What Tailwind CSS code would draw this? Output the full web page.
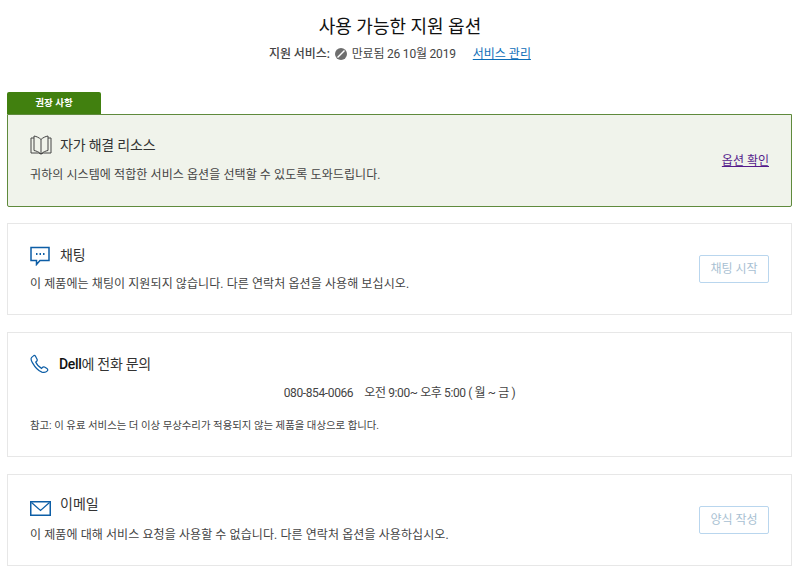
<!DOCTYPE html>
<html lang="ko">
<head>
    <meta charset="UTF-8">
    <meta name="viewport" content="width=device-width, initial-scale=1.0">
    <title>사용 가능한 지원 옵션</title>
    <script src="https://cdn.jsdelivr.net/npm/@tailwindcss/browser@4"></script>
</head>
<body class="bg-white text-[#333] h-[574px] w-[800px] overflow-hidden font-['Roboto','Noto_Sans_CJK_KR',sans-serif]">

    <!-- Header -->
    <div class="pt-[15px] text-center">
        <h1 class="text-[18px] leading-[24px] font-normal text-[#111]">사용 가능한 지원 옵션</h1>
        <div class="mt-[7px] flex items-center justify-center text-[12px] leading-[16px] text-[#444]">
            <span class="font-medium tracking-[-0.1px]">지원 서비스:</span>
            <svg class="ml-[5px] mr-[5px]" width="12" height="12" viewBox="0 0 12 12">
                <circle cx="6" cy="6" r="6" fill="#6e6e6e"/>
                <path d="M2.5 9.5 L9.5 2.5" stroke="#fff" stroke-width="1.4"/>
            </svg>
            <span class="tracking-[-0.2px]">만료됨 26 10월 2019</span>
            <a href="#" class="ml-[17px] text-[#0e6eb8] underline">서비스 관리</a>
        </div>
    </div>

    <div class="ml-[7px] mr-[8px] mt-[30px]">
        <!-- Recommended -->
        <div class="w-[94px] h-[22px] bg-[#41800f] rounded-t-[2px] flex items-center justify-center text-white text-[9.5px] font-bold">권장 사항</div>
        <div class="h-[93px] bg-[#f0f3eb] border border-[#5f8a3c] rounded-b-[2px] pl-[22px] pr-[22px] flex items-center justify-between">
            <div class="mb-[2px]">
                <div class="flex items-center h-[20px]">
                    <svg class="mr-[8px]" width="22" height="20" viewBox="0 0 22 20" fill="none" stroke="#444" stroke-width="1">
                        <path d="M11 4.5 C9 2.5 6.5 1.5 4 1 V15.5 C6.5 16 9 17 11 19 C13 17 15.5 16 18 15.5 V1 C15.5 1.5 13 2.5 11 4.5 Z"/>
                        <path d="M11 4.5 V19"/>
                        <path d="M4 3 H1 V18 H8.5 L11 19 L13.5 18 H21 V3 H18"/>
                    </svg>
                    <span class="text-[14px] text-[#333] tracking-[-0.2px]">자가 해결 리소스</span>
                </div>
                <p class="mt-[11px] text-[12px] leading-[18px] text-[#444] tracking-[0.09px]">귀하의 시스템에 적합한 서비스 옵션을 선택할 수 있도록 도와드립니다.</p>
            </div>
            <a href="#" class="text-[12px] text-[#551a8b] underline">옵션 확인</a>
        </div>

        <!-- Chat -->
        <div class="mt-[16px] h-[92px] border border-[#e7e7e7] pl-[22px] pr-[22px] flex items-center justify-between">
            <div>
                <div class="flex items-center h-[20px]">
                    <svg class="mr-[10px]" width="20" height="20" viewBox="0 0 20 20" fill="none">
                        <path d="M1 1.5 H19 V14.5 H10 L6.5 18.5 V14.5 H1 Z" stroke="#0d5ea6" stroke-width="1.5"/>
                        <path d="M6 8 H7.5 M9.5 8 H11 M13 8 H14.5" stroke="#0d5ea6" stroke-width="2"/>
                    </svg>
                    <span class="text-[14px] text-[#333] tracking-[-0.2px]">채팅</span>
                </div>
                <p class="mt-[9px] text-[12px] leading-[18px] text-[#444] tracking-[0.09px]">이 제품에는 채팅이 지원되지 않습니다. 다른 연락처 옵션을 사용해 보십시오.</p>
            </div>
            <button type="button" class="w-[70px] h-[28px] border border-[#b9d6ee] rounded-[2px] text-[12px] text-[#a8bfd2]">채팅 시작</button>
        </div>

        <!-- Phone -->
        <div class="mt-[17px] h-[125px] border border-[#e7e7e7] pl-[22px] pr-[22px] pt-[20px]">
            <div class="flex items-center h-[22px]">
                <svg class="mr-[10px]" width="19" height="20" viewBox="0 0 20 20" fill="none">
                    <path d="M4 1.2 L1.8 3 C0.8 4 1 6 2.5 8.5 C4.5 12 8.5 17 12.5 18.5 C15 19.3 17 18.7 18.2 17.3 C19 16.3 18.7 15.5 17.8 14.8 L15.3 13.2 C14.3 12.7 13.5 13 12.9 13.8 L12.2 14.6 C10 13.5 7 10.5 6 8 L7 7.2 C7.7 6.5 7.8 5.8 7.4 4.9 L5.8 1.8 C5.3 1 4.7 0.8 4 1.2 Z" stroke="#0d5ea6" stroke-width="1.3"/>
                </svg>
                <span class="text-[14px] text-[#333] tracking-[-0.3px]"><span class="font-medium text-[#111]">Dell</span>에 전화 문의</span>
            </div>
            <p class="mt-[9px] text-center text-[12px] leading-[18px] text-[#444] tracking-[-0.38px]">080-854-0066<span class="ml-[11px]">오전 9:00~ 오후 5:00 ( 월 ~ 금 )</span></p>
            <p class="mt-[16px] text-[10.4px] leading-[16px] text-[#444]">참고: 이 유료 서비스는 더 이상 무상수리가 적용되지 않는 제품을 대상으로 합니다.</p>
        </div>

        <!-- Email -->
        <div class="mt-[17px] h-[92px] border border-[#e7e7e7] pl-[22px] pr-[22px] flex items-center justify-between">
            <div>
                <div class="flex items-center h-[20px]">
                    <svg class="mr-[9px] mt-[3px]" width="21" height="15" viewBox="0 0 21 15" fill="none">
                        <path d="M0.75 0.75 H20.25 V14.25 H0.75 Z" stroke="#0d5ea6" stroke-width="1.5"/>
                        <path d="M1.5 1.5 L10.5 9.5 L19.5 1.5" stroke="#0d5ea6" stroke-width="1.2"/>
                    </svg>
                    <span class="text-[14px] text-[#333] -mt-[4px]">이메일</span>
                </div>
                <p class="mt-[9px] text-[12px] leading-[18px] text-[#444] tracking-[0.09px]">이 제품에 대해 서비스 요청을 사용할 수 없습니다. 다른 연락처 옵션을 사용하십시오.</p>
            </div>
            <button type="button" class="w-[70px] h-[28px] border border-[#b9d6ee] rounded-[2px] text-[12px] text-[#a8bfd2]">양식 작성</button>
        </div>
    </div>
</body>
</html>
